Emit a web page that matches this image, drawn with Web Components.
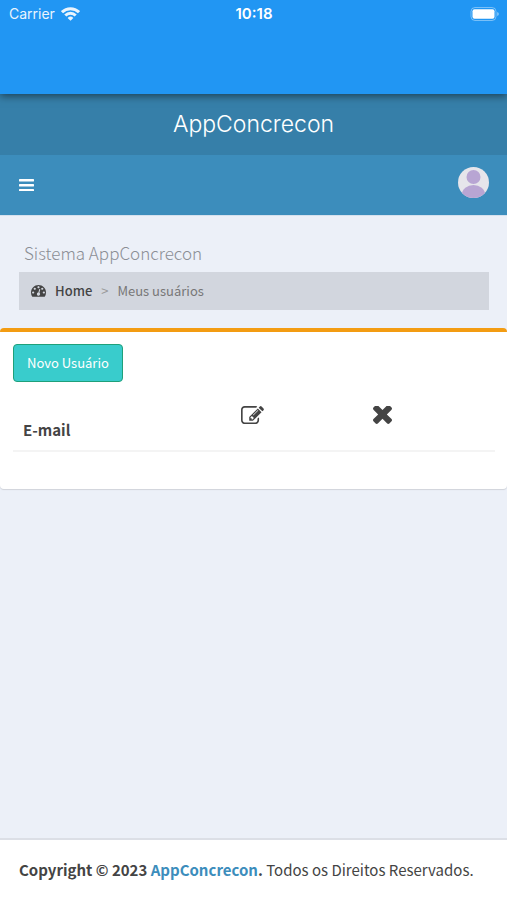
<!DOCTYPE html>
<html lang="pt-BR">
<head>
  <meta charset="utf-8">
  <meta name="viewport" content="width=device-width, initial-scale=1">
  <title>AppConcrecon</title>
  <style>
    body {
      margin: 0;
      background: #ecf0f8;
      color: #444;
      font: 15px/22px "Noto Sans CJK SC", "Open Sans", sans-serif;
    }
  </style>
</head>
<body>
  <app-shell>
    <status-bar slot="top" carrier="Carrier" time="10:18"></status-bar>
    <main-header slot="top">AppConcrecon</main-header>
    <content-header>
      Sistema AppConcrecon
      <span slot="current">Meus usuários</span>
    </content-header>
    <user-box></user-box>
    <main-footer slot="bottom"></main-footer>
  </app-shell>

  <script>
    // Base class: clones the template of each element in its shadow root.
    class BaseElement extends HTMLElement {
      constructor() {
        super();
        this.attachShadow({ mode: 'open' });
        this.shadowRoot.appendChild(this.template.content.cloneNode(true));
      }

      createTemplate(html) {
        const template = document.createElement('template');
        template.innerHTML = html;
        return template;
      }
    }

    class AppShell extends BaseElement {
      get template() {
        return this.createTemplate(`
          <style>
            :host {
              display: flex;
              flex-direction: column;
              min-height: 100vh;
            }
            main {
              flex: 1;
            }
          </style>
          <slot name="top"></slot>
          <main><slot></slot></main>
          <slot name="bottom"></slot>
        `);
      }
    }

    const ICONS = {
      bars: {
        box: '128 256 1536 1280',
        path: 'M1664 1344v128q0 26-19 45t-45 19h-1408q-26 0-45-19t-19-45v-128q0-26 19-45t45-19h1408q26 0 45 19t19 45zm0-512v128q0 26-19 45t-45 19h-1408q-26 0-45-19t-19-45v-128q0-26 19-45t45-19h1408q26 0 45 19t19 45zm0-512v128q0 26-19 45t-45 19h-1408q-26 0-45-19t-19-45v-128q0-26 19-45t45-19h1408q26 0 45 19t19 45z'
      },
      dashboard: {
        box: '0 256 1792 1408',
        path: 'M384 1152q0-53-37.5-90.5t-90.5-37.5-90.5 37.5-37.5 90.5 37.5 90.5 90.5 37.5 90.5-37.5 37.5-90.5zm192-448q0-53-37.5-90.5t-90.5-37.5-90.5 37.5-37.5 90.5 37.5 90.5 90.5 37.5 90.5-37.5 37.5-90.5zm428 481l101-382q6-26-7.5-48.5t-38.5-29.5-48 6.5-30 39.5l-101 382q-60 5-107 43.5t-63 98.5q-20 77 20 146t117 89 146-20 89-117q16-60-6-117t-72-91zm660-33q0-53-37.5-90.5t-90.5-37.5-90.5 37.5-37.5 90.5 37.5 90.5 90.5 37.5 90.5-37.5 37.5-90.5zm-640-640q0-53-37.5-90.5t-90.5-37.5-90.5 37.5-37.5 90.5 37.5 90.5 90.5 37.5 90.5-37.5 37.5-90.5zm448 192q0-53-37.5-90.5t-90.5-37.5-90.5 37.5-37.5 90.5 37.5 90.5 90.5 37.5 90.5-37.5 37.5-90.5zm320 448q0 261-141 483-19 29-54 29h-1402q-35 0-54-29-141-221-141-483 0-182 71-348t191-286 286-191 348-71 348 71 286 191 191 286 71 348z'
      },
      edit: {
        box: '0 128 1792 1408',
        path: 'M888 1184l116-116-152-152-116 116v56h96v96h56zm440-720q-16-16-33 1l-350 350q-17 17-1 33t33-1l350-350q17-17 1-33zm80 594v190q0 119-84.5 203.5t-203.5 84.5h-832q-119 0-203.5-84.5t-84.5-203.5v-832q0-119 84.5-203.5t203.5-84.5h832q63 0 117 25 15 7 18 23 3 17-9 29l-49 49q-14 14-32 8-23-6-45-6h-832q-66 0-113 47t-47 113v832q0 66 47 113t113 47h832q66 0 113-47t47-113v-126q0-13 9-22l64-64q15-15 35-7t20 29zm-96-738l288 288-672 672h-288v-288zm444 132l-92 92-288-288 92-92q28-28 68-28t68 28l152 152q28 28 28 68t-28 68z'
      },
      times: {
        box: '302 434 1188 1188',
        path: 'M1490 1322q0 40-28 68l-136 136q-28 28-68 28t-68-28l-294-294-294 294q-28 28-68 28t-68-28l-136-136q-28-28-28-68t28-68l294-294-294-294q-28-28-28-68t28-68l136-136q28-28 68-28t68 28l294 294 294-294q28-28 68-28t68 28l136 136q28 28 28 68t-28 68l-294 294 294 294q28 28 28 68z'
      }
    };

    class FaIcon extends BaseElement {
      connectedCallback() {
        const icon = ICONS[this.getAttribute('name')];
        const svg = this.shadowRoot.querySelector('svg');
        svg.setAttribute('viewBox', icon.box);
        svg.setAttribute('width', this.getAttribute('size'));
        svg.querySelector('path').setAttribute('d', icon.path);
      }

      get template() {
        return this.createTemplate(`
          <style>
            :host {
              display: inline-flex;
            }
            svg {
              display: block;
              fill: currentColor;
            }
          </style>
          <svg aria-hidden="true"><path/></svg>
        `);
      }
    }

    class StatusBar extends BaseElement {
      connectedCallback() {
        this.shadowRoot.querySelector('[carrier]').textContent = this.getAttribute('carrier');
        this.shadowRoot.querySelector('time').textContent = this.getAttribute('time');
      }

      get template() {
        return this.createTemplate(`
          <style>
            :host {
              display: block;
              position: relative;
              z-index: 1;
              padding: 4px 8px 70px 9px;
              background: #2196f3;
              box-shadow: 0 2px 8px rgba(0, 0, 0, .5);
              color: #fff;
              font: 15px/20px Inter, sans-serif;
            }
            .bar {
              display: grid;
              grid-template-columns: 1fr auto 1fr;
              align-items: center;
            }
            .left {
              display: flex;
              align-items: center;
              gap: 6px;
              font-size: 14px;
              opacity: .9;
            }
            time {
              font-weight: 600;
            }
            .battery {
              justify-self: end;
            }
          </style>
          <div class="bar">
            <div class="left">
              <span carrier></span>
              <svg width="19" height="14" viewBox="0 0 19 14" fill="none" stroke="#fff" stroke-width="3">
                <path d="M1 5.2a12.2 12.2 0 0 1 17 0"/>
                <path d="M4.3 8.5a7.4 7.4 0 0 1 10.4 0"/>
                <path d="M9.5 13.8L6.6 10.9a4.1 4.1 0 0 1 5.8 0z" fill="#fff" stroke="none"/>
              </svg>
            </div>
            <time></time>
            <svg class="battery" width="29" height="14" viewBox="0 0 29 14">
              <rect x="1" y=".5" width="25" height="13" rx="4" fill="none" stroke="#fff" stroke-opacity=".4"/>
              <rect x="2.5" y="2.3" width="22" height="9.4" rx="2" fill="#fff"/>
              <path d="M27 5v4q2-.6 2-2t-2-2z" fill="#fff" fill-opacity=".4"/>
            </svg>
          </div>
        `);
      }
    }

    class MainHeader extends BaseElement {
      get template() {
        return this.createTemplate(`
          <style>
            :host {
              display: block;
              color: #fff;
            }
            .logo {
              display: block;
              background: #367fa9;
              color: inherit;
              font: 300 23px/61px Inter, "Liberation Sans", sans-serif;
              text-align: center;
              text-decoration: none;
            }
            nav {
              display: flex;
              align-items: center;
              justify-content: space-between;
              height: 60px;
              padding: 0 18px 0 19px;
              background: #3c8dbc;
              border-bottom: 1px solid #d5e1ee;
            }
            button {
              display: flex;
              padding: 0;
              border: 0;
              background: none;
              color: inherit;
            }
            .user {
              padding-bottom: 6px;
            }
          </style>
          <a class="logo" href="#"><slot></slot></a>
          <nav>
            <button type="button" aria-label="Menu"><fa-icon name="bars" size="15"></fa-icon></button>
            <button type="button" class="user" aria-label="Perfil">
              <svg width="31" height="31" viewBox="0 0 31 31">
                <clipPath id="round"><circle cx="15.5" cy="15.5" r="15.5"/></clipPath>
                <g clip-path="url(#round)">
                  <rect width="31" height="31" fill="#e6e5eb"/>
                  <ellipse cx="15.5" cy="27" rx="11.5" ry="9" fill="#b8a5d3"/>
                  <circle cx="15.5" cy="10" r="8" fill="#e6e5eb"/>
                  <circle cx="15.5" cy="10" r="7" fill="#b8a5d3"/>
                </g>
              </svg>
            </button>
          </nav>
        `);
      }
    }

    class ContentHeader extends BaseElement {
      get template() {
        return this.createTemplate(`
          <style>
            :host {
              display: block;
              padding: 25px 18px 18px 19px;
            }
            h1 {
              margin: 0 0 7px;
              padding-left: 5px;
              color: #8b8e95;
              font-size: 17px;
              font-weight: 300;
              line-height: 24px;
            }
            ol {
              display: flex;
              margin: 0;
              padding: 9px 12px;
              background: #d2d6de;
              color: #777;
              font-size: 13px;
              line-height: 20px;
              list-style: none;
            }
            li {
              display: flex;
            }
            li + li::before {
              content: ">";
              padding: 0 9px;
              color: #999;
            }
            a {
              display: flex;
              align-items: center;
              gap: 9px;
              color: #444;
              font-weight: 500;
              text-decoration: none;
            }
          </style>
          <h1><slot></slot></h1>
          <ol>
            <li><a href="#"><fa-icon name="dashboard" size="15"></fa-icon>Home</a></li>
            <li><slot name="current"></slot></li>
          </ol>
        `);
      }
    }

    class UserBox extends BaseElement {
      get template() {
        return this.createTemplate(`
          <style>
            :host {
              display: block;
              padding: 12px 12px 12px 13px;
              background: #fff;
              border-top: 4px solid #f39c12;
              border-radius: 4px;
              box-shadow: 0 1px 1px rgba(0, 0, 0, .12);
            }
            button {
              display: block;
              padding: 7px 13px;
              background: #39cccc;
              border: 1px solid #1fa07a;
              border-radius: 4px;
              color: #fff;
              font: inherit;
              font-size: 13px;
            }
            table {
              width: 100%;
              margin: 14px 0 25px;
              border-collapse: collapse;
              table-layout: fixed;
            }
            th {
              height: 34px;
              padding: 10px;
              border-bottom: 2px solid #f4f4f4;
              line-height: 20px;
              text-align: left;
              vertical-align: bottom;
            }
            th:first-child {
              width: 41%;
            }
            th.icon {
              vertical-align: top;
            }
          </style>
          <button type="button">Novo Usuário</button>
          <table>
            <thead>
              <tr>
                <th scope="col">E-mail</th>
                <th scope="col" class="icon" aria-label="Editar"><fa-icon name="edit" size="23"></fa-icon></th>
                <th scope="col" class="icon" aria-label="Excluir"><fa-icon name="times" size="19"></fa-icon></th>
              </tr>
            </thead>
          </table>
        `);
      }
    }

    class MainFooter extends BaseElement {
      get template() {
        return this.createTemplate(`
          <style>
            :host {
              display: block;
              padding: 19px;
              background: #fff;
              border-top: 2px solid #dcdfe6;
            }
            a {
              color: #3c8dbc;
              text-decoration: none;
            }
          </style>
          <strong>Copyright © 2023 <a href="#">AppConcrecon</a>.</strong> Todos os Direitos Reservados.
        `);
      }
    }

    window.customElements.define('fa-icon', FaIcon);
    window.customElements.define('app-shell', AppShell);
    window.customElements.define('status-bar', StatusBar);
    window.customElements.define('main-header', MainHeader);
    window.customElements.define('content-header', ContentHeader);
    window.customElements.define('user-box', UserBox);
    window.customElements.define('main-footer', MainFooter);
  </script>
</body>
</html>
